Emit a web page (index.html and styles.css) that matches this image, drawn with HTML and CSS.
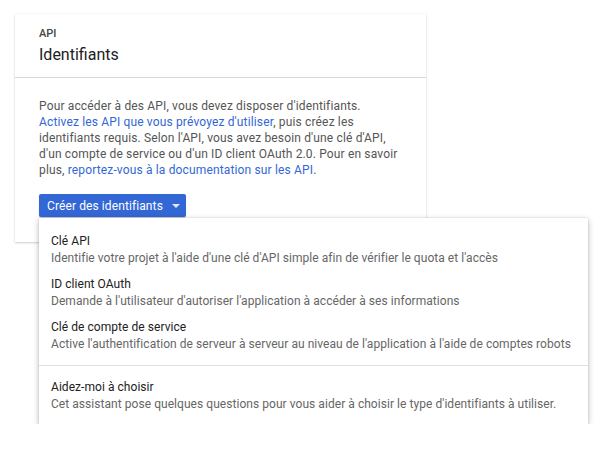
FILE: index.html
```html
<!DOCTYPE html>
<html lang="fr">
<head>
<meta charset="utf-8">
<link rel="stylesheet" href="styles.css">
</head>
<body>
<div class="card">
  <div class="card-header">
    <div class="eyebrow">API</div>
    <div class="title">Identifiants</div>
  </div>
  <div class="card-body">
    <p class="intro">Pour accéder à des API, vous devez disposer d'identifiants. <a href="#">Activez les API que vous prévoyez d'utiliser</a>, puis créez les identifiants requis. Selon l'API, vous avez besoin d'une clé d'API, d'un compte de service ou d'un ID client OAuth 2.0. Pour en savoir plus, <a href="#">reportez-vous à la documentation sur les API</a>.</p>
    <button class="btn">Créer des identifiants <span class="caret"></span></button>
  </div>
</div>
<div class="menu">
  <div class="item">
    <div class="item-title">Clé API</div>
    <div class="item-desc">Identifie votre projet à l'aide d'une clé d'API simple afin de vérifier le quota et l'accès</div>
  </div>
  <div class="item">
    <div class="item-title">ID client OAuth</div>
    <div class="item-desc">Demande à l'utilisateur d'autoriser l'application à accéder à ses informations</div>
  </div>
  <div class="item">
    <div class="item-title">Clé de compte de service</div>
    <div class="item-desc">Active l'authentification de serveur à serveur au niveau de l'application à l'aide de comptes robots</div>
  </div>
  <div class="sep"></div>
  <div class="item">
    <div class="item-title">Aidez-moi à choisir</div>
    <div class="item-desc">Cet assistant pose quelques questions pour vous aider à choisir le type d'identifiants à utiliser.</div>
  </div>
</div>
</body>
</html>
```
FILE: styles.css
```css
html, body {
  margin: 0;
  padding: 0;
  background: #fff;
  font-family: Roboto, "Noto Sans", sans-serif;
}
body {
  padding: 14px 0 0 15px;
}
.card {
  width: 411px;
  box-sizing: border-box;
  background: #fff;
  box-shadow: 0 1px 2px rgba(0,0,0,0.18), 0 0 1px rgba(0,0,0,0.12);
}
.card-header {
  padding: 13px 24px 0;
  height: 64px;
  box-sizing: border-box;
  border-bottom: 1px solid #d6d6d6;
}
.eyebrow {
  font-size: 11px;
  line-height: 14px;
  color: #444;
  font-weight: 500;
}
.title {
  font-size: 16px;
  line-height: 24px;
  color: #212121;
  margin-top: 2px;
}
.card-body {
  padding: 20px 24px 25px;
}
.intro {
  margin: 0 0 16px;
  font-size: 12px;
  line-height: 16px;
  letter-spacing: 0.15px;
  color: #555;
}
.intro a {
  color: #3367d6;
  text-decoration: none;
}
.btn {
  display: flex;
  align-items: center;
  gap: 8px;
  height: 23px;
  padding: 0 6px 0 8px;
  border: none;
  border-radius: 2px;
  background: #3367d6;
  color: #fff;
  font-family: inherit;
  font-size: 12px;
  letter-spacing: 0.1px;
  box-shadow: 0 1px 1px rgba(0,0,0,0.2);
}
.caret {
  width: 0;
  height: 0;
  border-left: 4px solid transparent;
  border-right: 4px solid transparent;
  border-top: 4px solid #fff;
  margin-left: 1px;
  opacity: 0.85;
}
.menu {
  position: relative;
  z-index: 2;
  margin: -24px 0 0 24px;
  width: 549px;
  box-sizing: border-box;
  padding: 10px 0 7px;
  background: #fff;
  box-shadow: 0 2px 6px rgba(0,0,0,0.28), 0 0 1px rgba(0,0,0,0.22);
}
.item {
  padding: 5px 12px 4px;
}
.item-title {
  font-size: 12px;
  line-height: 17px;
  letter-spacing: 0.05px;
  color: #212121;
}
.item-desc {
  font-size: 12px;
  line-height: 17px;
  letter-spacing: 0.05px;
  color: #666;
}
.sep {
  height: 1px;
  background: #e0e0e0;
  margin: 8px 0 8px;
}
```
